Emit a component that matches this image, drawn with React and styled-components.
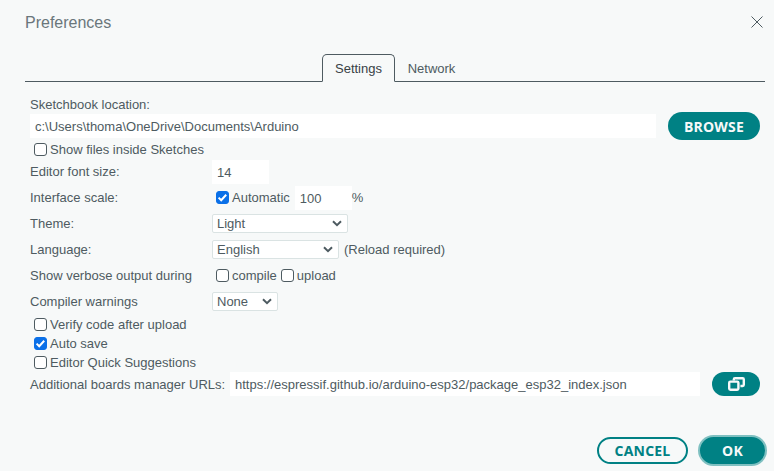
import React from "react";
import styled, { createGlobalStyle } from "styled-components";

const GlobalStyle = createGlobalStyle`
  html, body {
    margin: 0;
    padding: 0;
    background: #f7f9f9;
  }
  body {
    font-family: "Liberation Sans", Arial, sans-serif;
    font-size: 13px;
    color: #4e5b61;
  }
`;

const App = () => (
  <>
    <GlobalStyle />
    <Dialog>
      <Header>
        <Title>Preferences</Title>
        <CloseButton aria-label="Close">
          <svg width="12" height="12" viewBox="0 0 12 12">
            <path d="M.5.5l11 11M11.5.5l-11 11" stroke="#4e5b61" strokeWidth="1" fill="none" />
          </svg>
        </CloseButton>
      </Header>

      <Tabs>
        <Tab active>Settings</Tab>
        <Tab>Network</Tab>
      </Tabs>

      <Form>
        <StackedLabel>Sketchbook location:</StackedLabel>
        <PathRow>
          <TextInput value="c:\Users\thoma\OneDrive\Documents\Arduino" readOnly width={626} />
          <PillButton width={92} height={28}>BROWSE</PillButton>
        </PathRow>
        <IndentCheck>
          <CheckBox />
          Show files inside Sketches
        </IndentCheck>

        <Row>
          <RowLabel>Editor font size:</RowLabel>
          <TextInput value="14" readOnly width={57} />
        </Row>
        <Row>
          <RowLabel>Interface scale:</RowLabel>
          <CheckGroup>
            <CheckBox checked />
            Automatic
          </CheckGroup>
          <TextInput value="100" readOnly width={57} />
          <span>%</span>
        </Row>
        <Row>
          <RowLabel>Theme:</RowLabel>
          <Select width={136} defaultValue="Light">
            <option>Light</option>
            <option>Dark</option>
          </Select>
        </Row>
        <Row>
          <RowLabel>Language:</RowLabel>
          <Select width={127} defaultValue="English">
            <option>English</option>
          </Select>
          <Hint>(Reload required)</Hint>
        </Row>
        <Row>
          <RowLabel>Show verbose output during</RowLabel>
          <CheckGroup>
            <CheckBox />
            compile
          </CheckGroup>
          <CheckGroup>
            <CheckBox />
            upload
          </CheckGroup>
        </Row>
        <Row>
          <RowLabel>Compiler warnings</RowLabel>
          <Select width={66} defaultValue="None">
            <option>None</option>
          </Select>
        </Row>

        <IndentCheck>
          <CheckBox />
          Verify code after upload
        </IndentCheck>
        <IndentCheck>
          <CheckBox checked />
          Auto save
        </IndentCheck>
        <IndentCheck>
          <CheckBox />
          Editor Quick Suggestions
        </IndentCheck>

        <UrlRow>
          <UrlLabel>Additional boards manager URLs:</UrlLabel>
          <TextInput value="https://espressif.github.io/arduino-esp32/package_esp32_index.json" readOnly width={470} />
          <PillButton width={48} height={24} aria-label="Open URLs">
            <svg width="17" height="14" viewBox="0 0 17 14">
              <path
                d="M5.8 3.4V2.4c0-.7.5-1.2 1.2-1.2h7.6c.7 0 1.2.5 1.2 1.2v5.4c0 .7-.5 1.2-1.2 1.2H12.4"
                fill="none"
                stroke="#f7f9f9"
                strokeWidth="2.4"
              />
              <rect x="1.2" y="4.6" width="9.2" height="8.2" rx="1.2" fill="none" stroke="#f7f9f9" strokeWidth="2.4" />
            </svg>
          </PillButton>
        </UrlRow>
      </Form>

      <Footer>
        <OutlineButton>CANCEL</OutlineButton>
        <OkButton>OK</OkButton>
      </Footer>
    </Dialog>
  </>
);
export default App;

const Dialog = styled.div`
  width: 774px;
  height: 471px;
  box-sizing: border-box;
  padding: 0 9px 0 25px;
  display: flex;
  flex-direction: column;
  overflow: hidden;
`;

const Header = styled.div`
  height: 54px;
  flex: none;
  display: flex;
  justify-content: space-between;
  align-items: flex-start;
  padding-top: 14px;
  box-sizing: border-box;
`;

const Title = styled.div`
  font-size: 16px;
  line-height: 18px;
  color: #6a767b;
`;

const CloseButton = styled.div`
  width: 12px;
  height: 12px;
  margin: 2px 2px 0 0;
  line-height: 0;
`;

const Tabs = styled.div`
  height: 28px;
  flex: none;
  box-sizing: border-box;
  border-bottom: 1px solid #4e5b61;
  display: flex;
  justify-content: center;
`;

const Tab = styled.div`
  width: 73px;
  height: 28px;
  box-sizing: border-box;
  display: flex;
  align-items: center;
  justify-content: center;
  border-radius: 5px 5px 0 0;
  border: 1px solid ${props => (props.active ? "#4e5b61" : "transparent")};
  border-bottom: 1px solid ${props => (props.active ? "#f7f9f9" : "transparent")};
  color: ${props => (props.active ? "#374146" : "#4e5b61")};
`;

const Form = styled.div`
  padding: 15px 5px 0;
  display: flex;
  flex-direction: column;
`;

const StackedLabel = styled.div`
  height: 15px;
  line-height: 15px;
`;

const PathRow = styled.div`
  display: flex;
  align-items: center;
  justify-content: space-between;
  height: 28px;
`;

const TextInput = styled.input`
  box-sizing: border-box;
  height: 24px;
  flex: none;
  border: none;
  outline: none;
  background: #fff;
  padding: 0 5px;
  font: inherit;
  color: #4e5b61;
  width: ${props => props.width}px;
`;

const ButtonText = styled.button`
  box-sizing: border-box;
  padding: 0;
  font-family: "Open Sans", sans-serif;
  font-size: 14px;
  font-weight: 700;
  letter-spacing: 0.2px;
`;

const PillButton = styled(ButtonText)`
  width: ${props => props.width}px;
  height: ${props => props.height}px;
  border: none;
  border-radius: 14px;
  background: #008184;
  color: #f7f9f9;
  display: flex;
  align-items: center;
  justify-content: center;
`;

const IndentCheck = styled.label`
  display: flex;
  align-items: center;
  height: 19px;
  padding-left: 4px;
`;

const CheckBox = ({ checked }) => <Box type="checkbox" checked={!!checked} readOnly />;

const Box = styled.input`
  appearance: none;
  box-sizing: border-box;
  width: 13px;
  height: 13px;
  margin: 0 3px 0 0;
  flex: none;
  border: 1px solid #4e5b61;
  border-radius: 3px;
  background: #fff;
  &:checked {
    border-color: #0b70e8;
    background: #0b70e8 url("data:image/svg+xml,%3Csvg xmlns='http://www.w3.org/2000/svg' viewBox='0 0 13 13'%3E%3Cpath d='M2.6 6.6l2.6 2.6 5-5.4' fill='none' stroke='white' stroke-width='2'/%3E%3C/svg%3E") center / 13px 13px no-repeat;
  }
`;

const Row = styled.div`
  display: flex;
  align-items: center;
  box-sizing: border-box;
  height: 26px;
  padding-bottom: 2px;
  ${TextInput} {
    margin-bottom: -2px;
  }
`;

const RowLabel = styled.div`
  width: 182px;
  flex: none;
`;

const CheckGroup = styled.label`
  display: flex;
  align-items: center;
  margin-left: 4px;
  & + input {
    margin-left: 5px;
  }
`;

const Select = styled.select`
  appearance: none;
  box-sizing: border-box;
  width: ${props => props.width}px;
  height: 19px;
  border: 1px solid #dae3e3;
  border-radius: 2px;
  background: #fff url("data:image/svg+xml,%3Csvg xmlns='http://www.w3.org/2000/svg' viewBox='0 0 10 7'%3E%3Cpath d='M1 1.2l4 4 4-4' fill='none' stroke='%234e5b61' stroke-width='2'/%3E%3C/svg%3E") right 5px center / 10px 7px no-repeat;
  color: #4e5b61;
  font: inherit;
  padding: 0 0 0 4px;
  outline: none;
`;

const Hint = styled.span`
  margin-left: 5px;
`;

const UrlRow = styled.div`
  display: flex;
  align-items: center;
  height: 24px;
  ${ButtonText} {
    margin-left: auto;
  }
`;

const UrlLabel = styled.div`
  width: 200px;
  flex: none;
`;

const Footer = styled.div`
  margin: auto -2px 0 0;
  padding: 0 0 5px;
  display: flex;
  justify-content: flex-end;
  align-items: center;
  gap: 10px;
`;

const OutlineButton = styled(ButtonText)`
  width: 91px;
  height: 27px;
  border: 2px solid #008184;
  border-radius: 14px;
  background: transparent;
  color: #008184;
`;

const OkButton = styled(ButtonText)`
  width: 69px;
  height: 31px;
  border: 2px solid #7fc0c1;
  border-radius: 16px;
  background: #008184;
  color: #f7f9f9;
`;
